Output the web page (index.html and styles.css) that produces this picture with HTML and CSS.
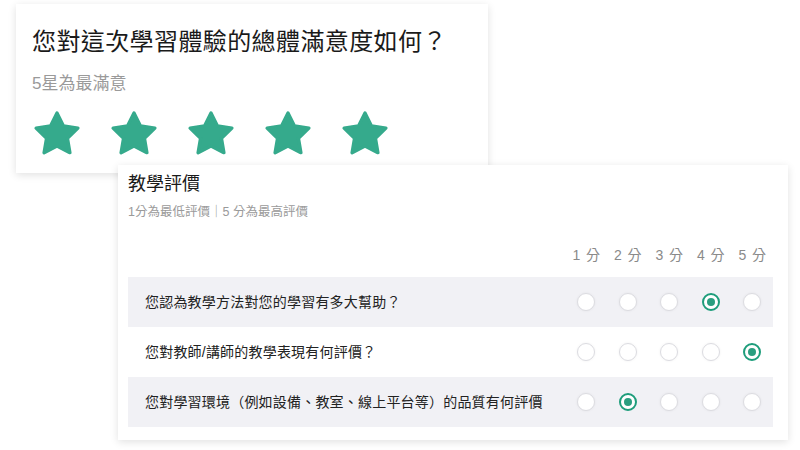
FILE: index.html
```html
<!DOCTYPE html>
<html lang="zh-Hant">
<head>
    <meta charset="UTF-8">
    <meta name="viewport" content="width=device-width, initial-scale=1.0">
    <title>課程滿意度問卷</title>
    <link rel="stylesheet" href="styles.css">
</head>
<body>
    <!-- Overall satisfaction card -->
    <section class="card star-card">
        <h1 class="star-title">您對這次學習體驗的總體滿意度如何？</h1>
        <p class="star-hint">5星為最滿意</p>
        <div class="stars">
            <svg class="star" viewBox="0.6 0.6 22.8 22" aria-hidden="true"><polygon points="12,2 15.09,8.26 22,9.27 17,14.14 18.18,21.02 12,17.77 5.82,21.02 7,14.14 2,9.27 8.91,8.26"/></svg>
            <svg class="star" viewBox="0.6 0.6 22.8 22" aria-hidden="true"><polygon points="12,2 15.09,8.26 22,9.27 17,14.14 18.18,21.02 12,17.77 5.82,21.02 7,14.14 2,9.27 8.91,8.26"/></svg>
            <svg class="star" viewBox="0.6 0.6 22.8 22" aria-hidden="true"><polygon points="12,2 15.09,8.26 22,9.27 17,14.14 18.18,21.02 12,17.77 5.82,21.02 7,14.14 2,9.27 8.91,8.26"/></svg>
            <svg class="star" viewBox="0.6 0.6 22.8 22" aria-hidden="true"><polygon points="12,2 15.09,8.26 22,9.27 17,14.14 18.18,21.02 12,17.77 5.82,21.02 7,14.14 2,9.27 8.91,8.26"/></svg>
            <svg class="star" viewBox="0.6 0.6 22.8 22" aria-hidden="true"><polygon points="12,2 15.09,8.26 22,9.27 17,14.14 18.18,21.02 12,17.77 5.82,21.02 7,14.14 2,9.27 8.91,8.26"/></svg>
        </div>
    </section>

    <!-- Teaching evaluation matrix -->
    <section class="card matrix-card">
        <h2 class="matrix-title">教學評價</h2>
        <p class="matrix-hint">1分為最低評價｜5 分為最高評價</p>

        <div class="matrix-head">
            <span class="cell">1 分</span>
            <span class="cell">2 分</span>
            <span class="cell">3 分</span>
            <span class="cell">4 分</span>
            <span class="cell">5 分</span>
        </div>

        <div class="matrix-row shaded">
            <span class="question">您認為教學方法對您的學習有多大幫助？</span>
            <label class="cell"><input type="radio" name="q1" class="radio"></label>
            <label class="cell"><input type="radio" name="q1" class="radio"></label>
            <label class="cell"><input type="radio" name="q1" class="radio"></label>
            <label class="cell"><input type="radio" name="q1" class="radio" checked></label>
            <label class="cell"><input type="radio" name="q1" class="radio"></label>
        </div>

        <div class="matrix-row">
            <span class="question">您對教師/講師的教學表現有何評價？</span>
            <label class="cell"><input type="radio" name="q2" class="radio"></label>
            <label class="cell"><input type="radio" name="q2" class="radio"></label>
            <label class="cell"><input type="radio" name="q2" class="radio"></label>
            <label class="cell"><input type="radio" name="q2" class="radio"></label>
            <label class="cell"><input type="radio" name="q2" class="radio" checked></label>
        </div>

        <div class="matrix-row shaded">
            <span class="question">您對學習環境（例如設備、教室、線上平台等）的品質有何評價</span>
            <label class="cell"><input type="radio" name="q3" class="radio"></label>
            <label class="cell"><input type="radio" name="q3" class="radio" checked></label>
            <label class="cell"><input type="radio" name="q3" class="radio"></label>
            <label class="cell"><input type="radio" name="q3" class="radio"></label>
            <label class="cell"><input type="radio" name="q3" class="radio"></label>
        </div>
    </section>
</body>
</html>
```

FILE: styles.css
```css
* {
    margin: 0;
    padding: 0;
    box-sizing: border-box;
}

html, body {
    width: 100%;
    height: 100%;
    overflow: hidden;
    background: #fff;
    font-family: "Liberation Sans", "Noto Sans CJK TC", sans-serif;
    color: #1f1f1f;
}

body {
    padding-top: 4px;
}

/* Cards */
.card {
    background: #fff;
    box-shadow: 0 2px 8px rgba(0, 0, 0, 0.12);
}

/* Star card */
.star-card {
    width: 472px;
    height: 169px;
    margin-left: 16px;
    padding: 22px 16px 0;
}

.star-title {
    font-size: 24px;
    font-weight: normal;
    line-height: 32px;
    letter-spacing: 0.4px;
    color: #1a1a1a;
}

.star-hint {
    margin-top: 14px;
    font-size: 17px;
    line-height: 24px;
    color: #9a9a9a;
}

.stars {
    display: flex;
    gap: 29px;
    margin-top: 14px;
    padding-left: 1px;
}

.star {
    width: 48px;
    height: 46px;
}

.star polygon {
    fill: #35aa8c;
    stroke: #35aa8c;
    stroke-width: 1.6;
    stroke-linejoin: round;
}

/* Matrix card */
.matrix-card {
    position: relative;
    width: 670px;
    height: 275px;
    margin-left: 118px;
    margin-top: -8px;
    padding: 7px 15px 0 10px;
}

.matrix-title {
    font-size: 18px;
    font-weight: normal;
    line-height: 24px;
    padding-left: 0;
    color: #1a1a1a;
}

.matrix-hint {
    margin-top: 7px;
    font-size: 12.5px;
    line-height: 18px;
    color: #9a9a9a;
}

.matrix-head {
    display: flex;
    justify-content: flex-end;
    margin-top: 24px;
    margin-bottom: 12px;
    font-size: 14px;
    line-height: 20px;
    color: #8a8a8a;
    letter-spacing: 1px;
}

.cell {
    width: 41.5px;
    display: flex;
    justify-content: center;
    align-items: center;
}

.matrix-head .cell {
    padding-left: 1px;
}

.matrix-row {
    display: flex;
    align-items: center;
    height: 50px;
    padding-left: 17px;
}

.matrix-row.shaded {
    background: #f1f1f5;
}

.question {
    flex: 1;
    font-size: 14px;
    line-height: 20px;
    color: #222;
    letter-spacing: 0.2px;
}

/* Radios */
.radio {
    appearance: none;
    width: 18px;
    height: 18px;
    border-radius: 50%;
    border: 1px solid #dcdce1;
    background: #fff;
    box-shadow: 0 0 3px rgba(0, 0, 0, 0.06);
    display: flex;
    align-items: center;
    justify-content: center;
    cursor: pointer;
}

.radio:checked {
    border: 2px solid #1e9d7b;
    box-shadow: none;
}

.radio:checked::after {
    content: "";
    width: 8px;
    height: 8px;
    border-radius: 50%;
    background: #2a9e7f;
}
```
